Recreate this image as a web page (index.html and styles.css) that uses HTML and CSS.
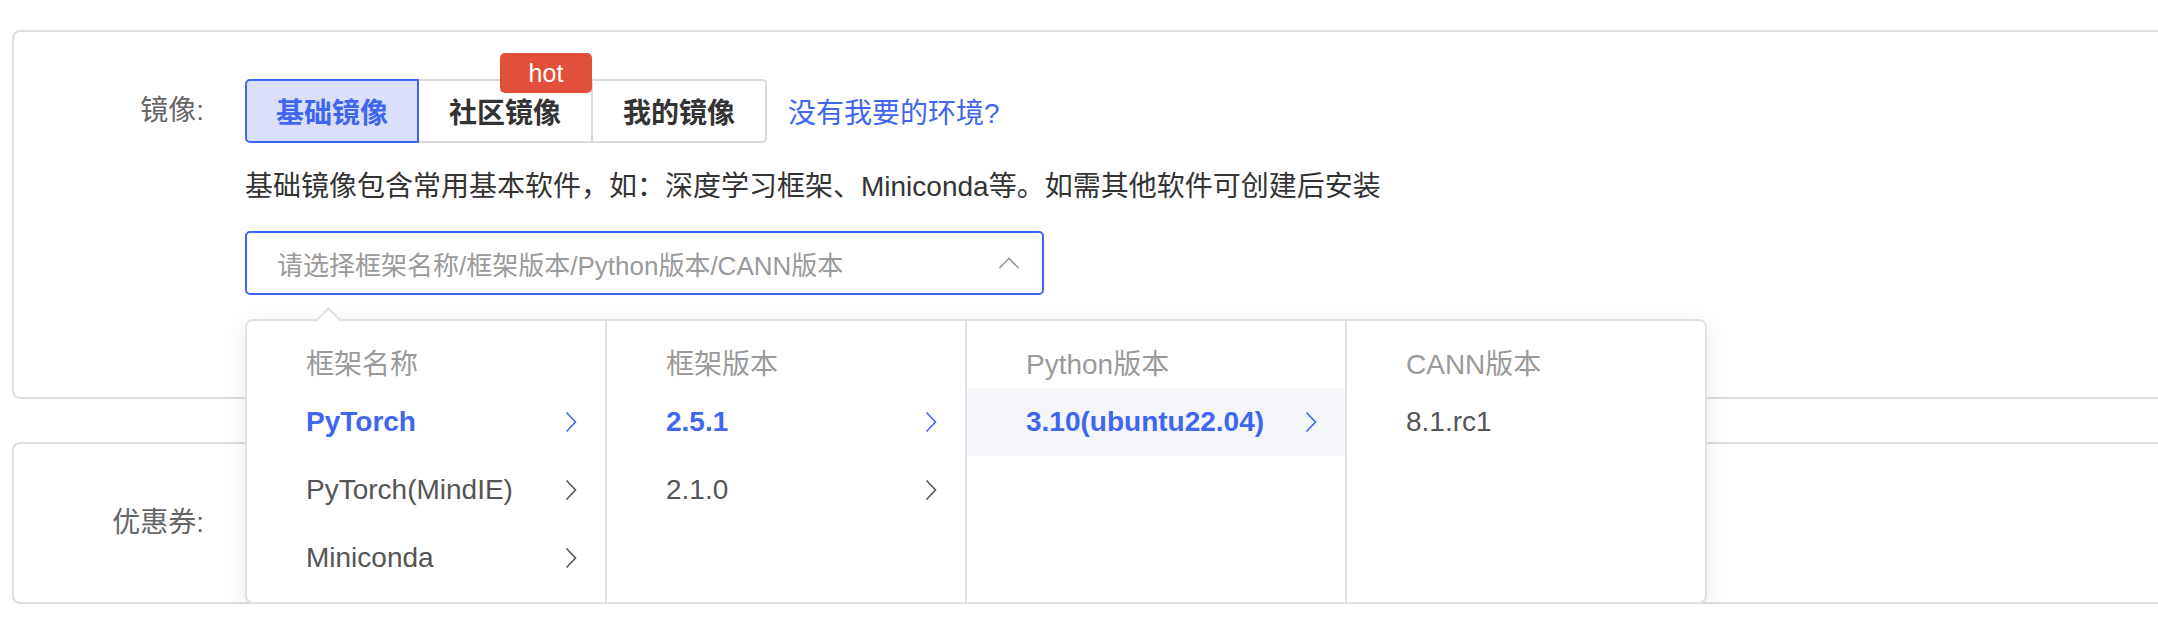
FILE: index.html
```html
<!DOCTYPE html>
<html lang="zh-CN">
<head>
<meta charset="utf-8">
<title>镜像选择</title>
<link rel="stylesheet" href="styles.css">
</head>
<body>
<div class="page">
  <section class="card card-image">
    <div class="form-item">
      <div class="label">镜像:</div>
      <div class="content">
        <div class="tabs-row">
          <div class="tabs">
            <div class="tab active">基础镜像</div>
            <div class="tab has-tag">社区镜像<span class="tag">hot</span></div>
            <div class="tab">我的镜像</div>
          </div>
          <a class="link">没有我要的环境?</a>
        </div>
        <p class="desc">基础镜像包含常用基本软件，如：深度学习框架、Miniconda等。如需其他软件可创建后安装</p>
        <div class="select-wrap">
          <div class="select">
            <span class="placeholder">请选择框架名称/框架版本/Python版本/CANN版本</span>
            <svg class="select-arrow" width="22" height="12" viewBox="0 0 22 12"><polyline points="1.5,11 11,1.5 20.5,11" fill="none" stroke="#9a9a9a" stroke-width="1.6"/></svg>
          </div>
          <div class="cascader">
            <ul class="col">
              <li class="col-head">框架名称</li>
              <li class="opt active"><span>PyTorch</span><svg class="chev" width="12" height="22" viewBox="0 0 12 22"><polyline points="1.5,1.5 10.5,11 1.5,20.5" fill="none" stroke="currentColor" stroke-width="1.6"/></svg></li>
              <li class="opt"><span>PyTorch(MindIE)</span><svg class="chev" width="12" height="22" viewBox="0 0 12 22"><polyline points="1.5,1.5 10.5,11 1.5,20.5" fill="none" stroke="currentColor" stroke-width="1.6"/></svg></li>
              <li class="opt"><span>Miniconda</span><svg class="chev" width="12" height="22" viewBox="0 0 12 22"><polyline points="1.5,1.5 10.5,11 1.5,20.5" fill="none" stroke="currentColor" stroke-width="1.6"/></svg></li>
            </ul>
            <ul class="col">
              <li class="col-head">框架版本</li>
              <li class="opt active"><span>2.5.1</span><svg class="chev" width="12" height="22" viewBox="0 0 12 22"><polyline points="1.5,1.5 10.5,11 1.5,20.5" fill="none" stroke="currentColor" stroke-width="1.6"/></svg></li>
              <li class="opt"><span>2.1.0</span><svg class="chev" width="12" height="22" viewBox="0 0 12 22"><polyline points="1.5,1.5 10.5,11 1.5,20.5" fill="none" stroke="currentColor" stroke-width="1.6"/></svg></li>
            </ul>
            <ul class="col col-wide">
              <li class="col-head">Python版本</li>
              <li class="opt active hover"><span>3.10(ubuntu22.04)</span><svg class="chev" width="12" height="22" viewBox="0 0 12 22"><polyline points="1.5,1.5 10.5,11 1.5,20.5" fill="none" stroke="currentColor" stroke-width="1.6"/></svg></li>
            </ul>
            <ul class="col col-last">
              <li class="col-head">CANN版本</li>
              <li class="opt"><span>8.1.rc1</span></li>
            </ul>
          </div>
        </div>
      </div>
    </div>
  </section>
  <section class="card card-coupon">
    <div class="form-item">
      <div class="label">优惠券:</div>
      <div class="content"></div>
    </div>
  </section>
</div>
</body>
</html>
```
FILE: styles.css
```css
html, body {
  margin: 0;
  padding: 0;
  background: #fff;
  overflow: hidden;
}
body {
  font-family: "Liberation Sans", "Noto Sans CJK SC", sans-serif;
  font-size: 28px;
  color: #333;
}
.page {
  padding: 30px 0 0 12px;
}
.card {
  border: 2px solid #dcdce1;
  border-radius: 8px;
  margin-right: -40px;
  background: #fff;
}
.card-image {
  padding: 47px 0 102px;
  position: relative;
  z-index: 2;
}
.card-coupon {
  margin-top: 43px;
  padding: 47px 0;
  position: relative;
  z-index: 1;
}
.form-item {
  display: flex;
  align-items: flex-start;
}
.label {
  width: 190px;
  margin-right: 41px;
  text-align: right;
  height: 64px;
  line-height: 64px;
  color: #666;
  flex: none;
}
.content {
  display: flex;
  flex-direction: column;
}
.tabs-row {
  display: flex;
  align-items: center;
  height: 64px;
}
.tabs {
  display: flex;
}
.tab {
  width: 174px;
  height: 64px;
  box-sizing: border-box;
  border: 2px solid #d9d9de;
  border-left: none;
  display: flex;
  align-items: center;
  justify-content: center;
  font-weight: 700;
  color: #333;
  background: #fff;
}
.tab:last-child {
  border-radius: 0 5px 5px 0;
}
.tab.active {
  border: 2px solid #3f66f0;
  background: #dadffa;
  color: #3f66f0;
  border-radius: 5px 0 0 5px;
}
.has-tag {
  position: relative;
}
.tag {
  position: absolute;
  right: -1px;
  top: -28px;
  width: 92px;
  height: 40px;
  border-radius: 5px;
  background: #e24f3b;
  color: #fff;
  font-size: 25px;
  font-weight: 400;
  line-height: 40px;
  text-align: center;
}
.link {
  margin-left: 21px;
  color: #3f66f0;
  cursor: pointer;
}
.desc {
  margin: 24px 0 0;
  height: 40px;
  line-height: 40px;
  color: #333;
}
.select-wrap {
  position: relative;
  margin-top: 24px;
}
.select {
  width: 799px;
  height: 64px;
  box-sizing: border-box;
  border: 2px solid #3f66f0;
  border-radius: 5px;
  padding: 0 22px 0 30px;
  display: flex;
  align-items: center;
  justify-content: space-between;
}
.placeholder {
  color: #9a9a9a;
  font-size: 26px;
}
.select-arrow {
  display: block;
}
.cascader {
  position: absolute;
  left: 0;
  top: 88px;
  z-index: 10;
  display: flex;
  background: #fff;
  border: 2px solid #e2e2e6;
  border-radius: 8px;
  box-shadow: 0 6px 28px rgba(0, 0, 0, 0.08);
}
.cascader::before {
  content: "";
  position: absolute;
  left: 72px;
  top: -10px;
  width: 17px;
  height: 17px;
  background: #fff;
  border-top: 2px solid #e2e2e6;
  border-left: 2px solid #e2e2e6;
  transform: rotate(45deg);
}
.col {
  list-style: none;
  margin: 0;
  padding: 12px 0 0;
  width: 360px;
  height: 281px;
  box-sizing: border-box;
  border-right: 2px solid #e2e2e6;
}
.col-wide {
  width: 380px;
}
.col-last {
  width: 358px;
  border-right: none;
}
.col-head {
  height: 55px;
  box-sizing: border-box;
  padding: 3px 0 0 59px;
  display: flex;
  align-items: center;
  color: #9a9a9a;
}
.opt {
  height: 68px;
  padding: 0 28px 0 59px;
  display: flex;
  align-items: center;
  justify-content: space-between;
  color: #555;
}
.opt.active {
  color: #3f66f0;
  font-weight: 700;
}
.opt.hover {
  background: #f5f6fa;
}
.chev {
  display: block;
  color: #555;
}
.opt.active .chev {
  color: #3f66f0;
}
```
